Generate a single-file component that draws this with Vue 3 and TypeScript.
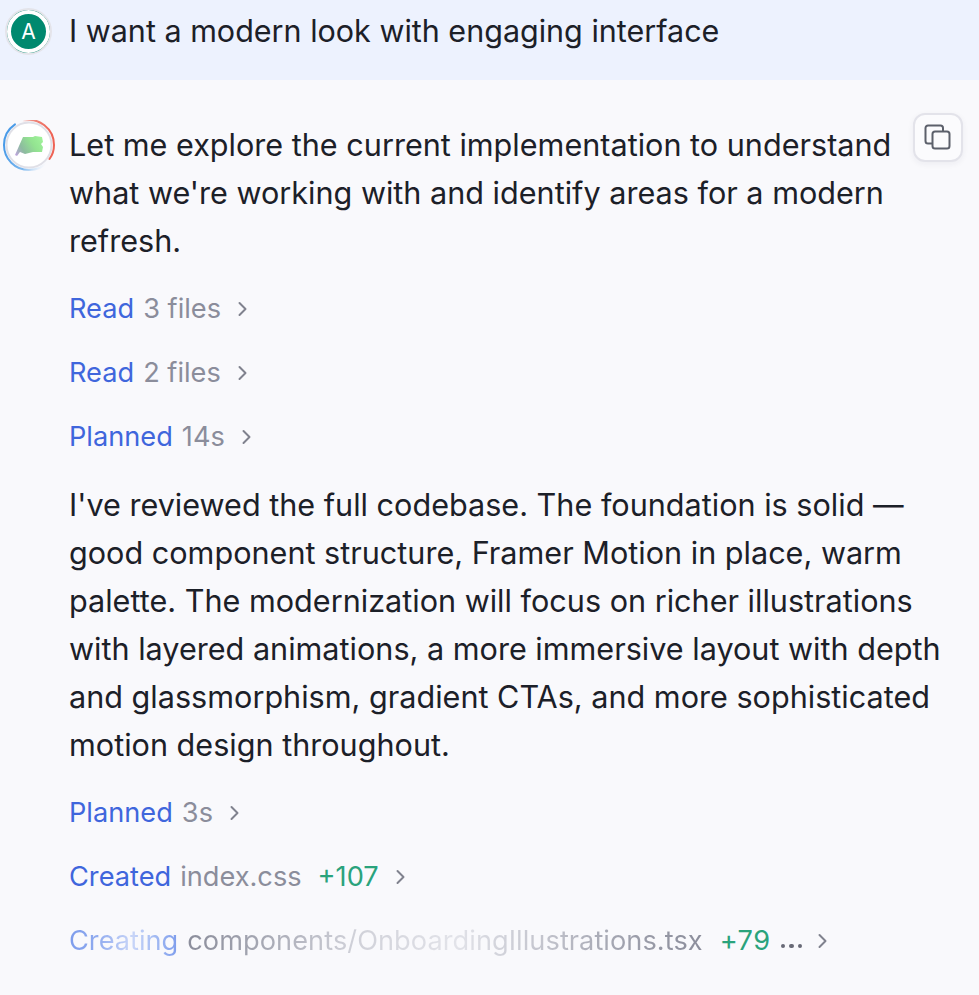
<script setup lang="ts">
const para1 = "Let me explore the current implementation to understand what we're working with and identify areas for a modern refresh."
const para2 = "I've reviewed the full codebase. The foundation is solid — good component structure, Framer Motion in place, warm palette. The modernization will focus on richer illustrations with layered animations, a more immersive layout with depth and glassmorphism, gradient CTAs, and more sophisticated motion design throughout."

const firstSteps = [
  { verb: 'Read', detail: '3 files' },
  { verb: 'Read', detail: '2 files' },
  { verb: 'Planned', detail: '14s' },
]
const secondSteps = [
  { verb: 'Planned', detail: '3s', added: '' },
  { verb: 'Created', detail: 'index.css', added: '+107' },
]
</script>

<template>
  <div class="chat">
    <header class="user-msg">
      <div class="avatar"><span>A</span></div>
      <p class="user-text">I want a modern look with engaging interface</p>
    </header>

    <section class="reply">
      <div class="logo">
        <svg width="54" height="54" viewBox="0 0 54 54" fill="none">
          <defs>
            <linearGradient id="ringRed" x1="48" y1="12" x2="20" y2="2" gradientUnits="userSpaceOnUse">
              <stop offset="0" stop-color="#ee6355" />
              <stop offset="0.7" stop-color="#ee8a7e" />
              <stop offset="1" stop-color="#ee8a7e" stop-opacity="0" />
            </linearGradient>
            <linearGradient id="ringBlue" x1="3" y1="28" x2="44" y2="44" gradientUnits="userSpaceOnUse">
              <stop offset="0" stop-color="#4a9be8" />
              <stop offset="0.55" stop-color="#7db8ee" />
              <stop offset="1" stop-color="#cfe3f6" stop-opacity="0" />
            </linearGradient>
            <linearGradient id="mark" x1="13" y1="36" x2="41" y2="18" gradientUnits="userSpaceOnUse">
              <stop offset="0" stop-color="#c5a2e6" />
              <stop offset="0.3" stop-color="#8dbb9f" />
              <stop offset="0.65" stop-color="#93e391" />
              <stop offset="1" stop-color="#a0f39a" />
            </linearGradient>
          </defs>
          <circle cx="27" cy="25" r="22.500" fill="#fff" stroke="#e0e0e7" stroke-width="2" />
          <path d="M21 .7A25 25 0 0 1 52 25c0 5-1.500 10-4.500 14" stroke="url(#ringRed)" stroke-width="2" stroke-linecap="round" />
          <path d="M13 4.300A25 25 0 0 0 2 25c0 14 11 25 25 25 8 0 15-3.500 19.500-9" stroke="url(#ringBlue)" stroke-width="2" stroke-linecap="round" />
          <path d="M13 35 21 17 31 17 33 16 40 17 41 22 39 24 41 27 40 32 31 32 23 34 18 32 15 36 Z" fill="url(#mark)" />
        </svg>
      </div>

      <button class="copy" type="button" aria-label="Copy">
        <svg width="28" height="28" viewBox="0 0 28 28" fill="none" stroke="#5c606b" stroke-width="2">
          <path d="M8.500 19.500H4A2.500 2.500 0 0 1 1.500 17V4A2.500 2.500 0 0 1 4 1.500H16.500A2.500 2.500 0 0 1 19 4V7.500" />
          <rect x="8.500" y="7.500" width="17" height="17" rx="2.500" />
        </svg>
      </button>

      <p class="para">{{ para1 }}</p>

      <div class="steps first">
        <div v-for="(s, i) in firstSteps" :key="i" class="step">
          <span class="verb">{{ s.verb }}</span>
          <span class="detail">{{ s.detail }}</span>
          <svg class="chev" width="12" height="16" viewBox="0 0 12 16" fill="none"><path d="M2.500 2 8.500 8l-6 6" /></svg>
        </div>
      </div>

      <p class="para">{{ para2 }}</p>

      <div class="steps second">
        <div v-for="(s, i) in secondSteps" :key="i" class="step">
          <span class="verb">{{ s.verb }}</span>
          <span class="detail">{{ s.detail }}</span>
          <span v-if="s.added" class="added">{{ s.added }}</span>
          <svg class="chev" width="12" height="16" viewBox="0 0 12 16" fill="none"><path d="M2.500 2 8.500 8l-6 6" /></svg>
        </div>
        <div class="step">
          <span class="verb shimmer-verb">Creating</span>
          <span class="detail shimmer-detail">components/OnboardingIllustrations.tsx</span>
          <span class="added wide">+79</span>
          <span class="dots"><i /><i /><i /></span>
          <svg class="chev last" width="12" height="16" viewBox="0 0 12 16" fill="none"><path d="M2.500 2 8.500 8l-6 6" /></svg>
        </div>
      </div>
    </section>
  </div>
</template>

<style scoped>
.chat {
  width: 979px;
  height: 995px;
  overflow: hidden;
  background: #f9f9fc;
  font-family: Inter, "Liberation Sans", sans-serif;
  color: #1c2028;
}

.user-msg {
  height: 80px;
  background: #edf2fe;
  display: flex;
  align-items: flex-start;
  padding: 7px 0 0 5px;
  box-sizing: border-box;
}

.avatar {
  width: 47px;
  height: 47px;
  margin-top: 1px;
  box-sizing: border-box;
  border-radius: 50%;
  border: 2px solid #e4e4ea;
  background: #00896f;
  box-shadow: inset 0 0 0 4px #fff;
  color: #fff;
  font-size: 21px;
  display: flex;
  align-items: center;
  justify-content: center;
  flex-shrink: 0;
}

.user-text {
  margin: 0 0 0 17px;
  font-size: 30.500px;
  line-height: 48px;
  white-space: nowrap;
}

.reply {
  position: relative;
  padding: 41px 20px 0 69px;
}

.logo {
  position: absolute;
  left: 2px;
  top: 40px;
  width: 54px;
  height: 54px;
}

.copy {
  position: absolute;
  left: 913px;
  top: 33px;
  width: 50px;
  height: 49px;
  padding: 0;
  border: 2px solid #e3e3ea;
  border-radius: 12px;
  background: #fbfbfd;
  box-shadow: 0 2px 6px rgba(30, 30, 60, 0.06);
  display: flex;
  align-items: center;
  justify-content: center;
}

.para {
  margin: 0;
  font-size: 30.600px;
  line-height: 48px;
}

.steps {
  display: flex;
  flex-direction: column;
  gap: 24px;
  font-size: 27.200px;
  line-height: 40px;
}

.steps.first {
  margin: 24px 0 24px;
}

.steps.second {
  margin-top: 24px;
}

.step {
  display: flex;
  align-items: center;
  height: 40px;
  white-space: nowrap;
}

.verb {
  color: #3f66dc;
}

.detail {
  margin-left: 9px;
  color: #8b8d9b;
}

.added {
  margin-left: 16px;
  color: #2aa37c;
}

.added.wide {
  margin-left: 17px;
  letter-spacing: 0.5px;
}

.chev {
  margin-left: 16px;
  stroke: #80828e;
  stroke-width: 2;
  stroke-linecap: round;
  stroke-linejoin: round;
}

.chev.last {
  margin-left: 15px;
}

.shimmer-verb,
.shimmer-detail {
  -webkit-background-clip: text;
  background-clip: text;
  color: transparent;
}

.shimmer-verb {
  background-image: linear-gradient(90deg, #7d9cec 0%, #8faaef 25%, #c8d5f8 58%, #a5bcf3 78%, #7d9cec 100%);
}

.shimmer-detail {
  letter-spacing: 0.05px;
  background-image: linear-gradient(90deg, #8b8d9b 0%, #a9abb6 16%, #cfd0d8 32%, #e2e3e9 52%, #c5c6cf 68%, #9fa1ad 85%, #8b8d9b 100%);
}

.dots {
  display: flex;
  gap: 4px;
  margin-left: 10px;
  padding-top: 10px;
}

.dots i {
  width: 4.500px;
  height: 4.500px;
  border-radius: 50%;
  background: #686a76;
}
</style>

<style>
html,
body {
  background: #f9f9fc;
}
</style>
